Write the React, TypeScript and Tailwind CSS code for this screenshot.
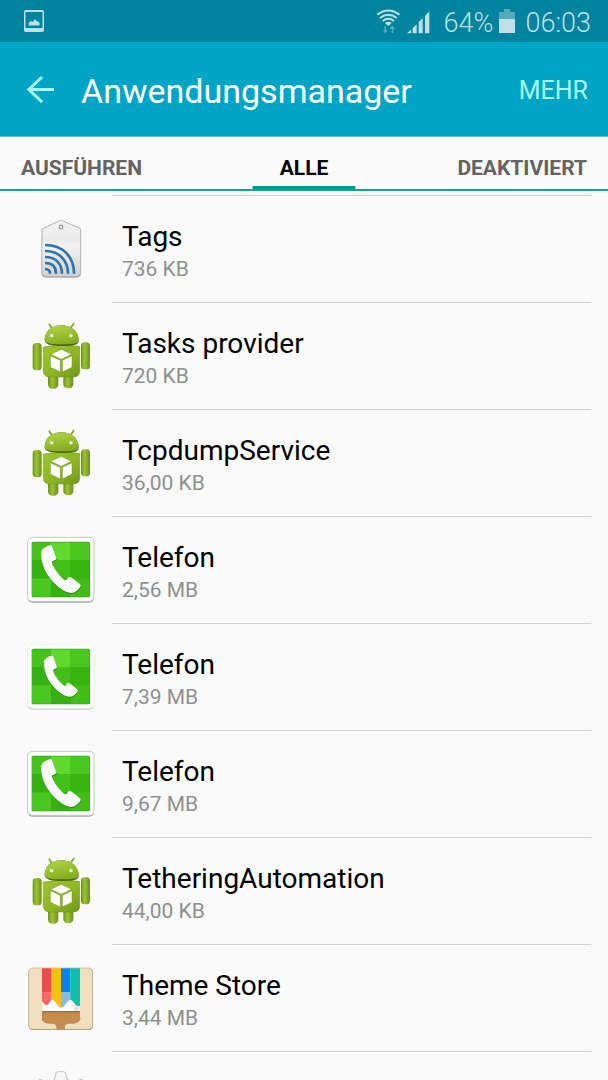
import type { ReactNode } from 'react';

interface AppEntry {
    name: string;
    size: string;
    icon: ReactNode;
}

const TagIcon = () => (
    <svg viewBox="15 26 216 216" className="size-full" aria-hidden="true">
        <defs>
            <linearGradient id="tag-body" x1="0" y1="0" x2="0" y2="1">
                <stop offset="0" stopColor="#f4f4f4" />
                <stop offset="0.35" stopColor="#e9e9e9" />
                <stop offset="0.45" stopColor="#f3f3f3" />
                <stop offset="1" stopColor="#cfcfcf" />
            </linearGradient>
        </defs>
        <path d="M66 71 L119 46 Q123 44 127 46 L180 69 Q182 70 182 74 V204 Q182 215 171 215 H76 Q65 215 65 204 Z" fill="url(#tag-body)" stroke="#b4b4b4" strokeWidth="3" />
        <path d="M69 207 Q71 215 80 215 H168 Q178 214 180 206" fill="none" stroke="#a2a2a2" strokeWidth="3" />
        <circle cx="123" cy="65" r="5.5" fill="#e8e8e8" stroke="#999999" strokeWidth="3.5" />
        <g fill="none" stroke="#2f74ad" strokeWidth="8">
            <path d="M75 119 C130 119 162 155 162 205" />
            <path d="M75 137 C118 137 144 165 144 205" />
            <path d="M75 155 C107 155 126 175 126 205" />
            <path d="M75 173 C97 173 108 185 108 205" />
            <path d="M75 191 C86 191 90 195 90 205" />
        </g>
    </svg>
);

const AndroidIcon = () => (
    <svg viewBox="15 27 216 216" className="size-full" aria-hidden="true">
        <defs>
            <linearGradient id="droid-body" x1="0" y1="0" x2="1" y2="1">
                <stop offset="0" stopColor="#9fc52d" />
                <stop offset="0.6" stopColor="#8cb522" />
                <stop offset="1" stopColor="#6f9419" />
            </linearGradient>
            <linearGradient id="droid-limb" x1="0" y1="0" x2="1" y2="0">
                <stop offset="0" stopColor="#6d8f1c" />
                <stop offset="0.4" stopColor="#9cc433" />
                <stop offset="1" stopColor="#6d8f1c" />
            </linearGradient>
            <linearGradient id="droid-head" x1="0" y1="0" x2="0.4" y2="1">
                <stop offset="0" stopColor="#b5d84c" />
                <stop offset="1" stopColor="#86ae20" />
            </linearGradient>
        </defs>
        <path d="M88 37 L99 55 M161 35 L148 54" stroke="#86a836" strokeWidth="5.5" strokeLinecap="round" />
        <rect x="84" y="178" width="31" height="52" rx="13" fill="url(#droid-limb)" />
        <rect x="130" y="178" width="30" height="51" rx="13" fill="url(#droid-limb)" />
        <rect x="38" y="93" width="27" height="82" rx="11" fill="url(#droid-limb)" />
        <rect x="183" y="91" width="27" height="81" rx="11" fill="url(#droid-limb)" />
        <path d="M70 105 Q125 96 179 103 V176 Q179 195 160 195 H90 Q70 195 70 176 Z" fill="url(#droid-body)" stroke="#6d8f1c" strokeWidth="1.5" />
        <path d="M74 84 C74 57 96 40 124 40 C152 40 176 57 176 87 C176 101 150 102 125 102 C98 102 74 99 74 84 Z" fill="#4c6812" />
        <path d="M74 84 C74 57 96 40 124 40 C152 40 176 57 176 85 C176 96 150 97 125 97 C98 97 74 95 74 84 Z" fill="url(#droid-head)" />
        <circle cx="95" cy="71" r="5" fill="#ffffff" />
        <circle cx="153" cy="71" r="5" fill="#ffffff" />
        <g fill="#ffffff" stroke="#688b17" strokeWidth="1.5" strokeLinejoin="round">
            <path d="M124 112 L155 127 L124 142 L92 127 Z" />
            <path d="M91 131 L121 145 V180 L91 166 Z" />
            <path d="M156 131 L127 145 V180 L156 166 Z" />
        </g>
    </svg>
);

const handset =
    'M64 66 C65 56 79 49 89 46 C93 45 95 47 97 51 L109 84 C110 87 108 89 104 91 L97 94 C94 97 98 107 106 119 C116 134 130 149 137 151 C140 151 141 149 143 145 C145 140 149 140 153 142 L179 162 C183 165 183 168 180 172 C175 179 167 188 155 189 C137 190 106 169 86 139 C70 116 62 90 64 66 Z';

const PhoneIcon = ({ small = false }: { small?: boolean }) => (
    <svg viewBox="15 15 216 216" className="size-full" aria-hidden="true">
        <rect x="23" y="24" width="199" height="194" rx="14" fill={small ? '#cbcbcb' : '#a8a8a8'} />
        <rect x="23" y="22" width="199" height="192" rx="14" fill="#ffffff" stroke={small ? '#eeeeee' : '#c6c6c6'} strokeWidth="3" />
        <rect x="35" y="35" width="175" height="167" rx="5" fill="#2ea70c" />
        <path d="M40 37 H93 V90 H36 V41 Q36 37 40 37 Z" fill="#45c01c" />
        <path d="M93 37 H152 V90 H93 Z" fill="#60d92f" />
        <path d="M152 37 H205 Q209 37 209 41 V90 H152 Z" fill="#4bc81f" />
        <path d="M36 90 H93 V145 H36 Z" fill="#37b012" />
        <path d="M93 90 H152 V145 H93 Z" fill="#42c018" />
        <path d="M152 90 H209 V145 H152 Z" fill="#38b310" />
        <path d="M36 145 H93 V200 H40 Q36 200 36 196 Z" fill="#4bc722" />
        <path d="M93 145 H152 V200 H93 Z" fill="#37b112" />
        <path d="M152 145 H209 V196 Q209 200 205 200 H152 Z" fill="#42bd18" />
        <g transform={small ? 'translate(17 17) scale(0.86)' : undefined}>
            <path d={handset} fill="#278c0d" transform="translate(1 3)" />
            <path d={handset} fill="#fafafa" />
        </g>
    </svg>
);

const ThemeIcon = () => (
    <svg viewBox="15 23 216 216" className="size-full" aria-hidden="true">
        <rect x="26" y="39" width="193" height="185" rx="13" fill="#7d7a68" />
        <rect x="26" y="38" width="192" height="184" rx="13" fill="#f1e0bd" stroke="#b9b19c" strokeWidth="2" />
        <path d="M66 125 H180 V168 H66 Z" fill="#ffffff" />
        <path d="M162 145 H178 V168 H162 Z" fill="#e6e6e6" />
        <path d="M66 39 H95 V111 H66 Z" fill="#eb4c50" />
        <path d="M66 111 H95 V134 C88 137 88 149 80 149 C74 149 72 143 66 139 Z" fill="#ff676b" />
        <path d="M95 39 H123 V157 C112 157 108 133 95 134 Z" fill="#f2c40f" />
        <path d="M123 39 H151 V111 H123 Z" fill="#0784ec" />
        <path d="M123 111 H151 V134 C139 136 137 156 123 157 Z" fill="#87bde2" />
        <path d="M151 39 H180 V152 C164 154 162 135 151 134 Z" fill="#0dbfac" />
        <path d="M66 168 H180 V187 C180 201 169 204 151 204 C137 204 133 208 133 222 H111 C111 208 105 204 94 204 C77 204 66 199 66 187 Z" fill="#c58c4b" />
        <path d="M66 168 H180 V171 H66 Z" fill="#8f5f35" />
        <path d="M66 187 C66 199 77 204 94 204 C105 204 111 208 111 222 M180 187 C180 201 169 204 151 204 C137 204 133 208 133 222" fill="none" stroke="#a8783f" strokeWidth="2" />
    </svg>
);

const GearIcon = () => (
    <svg viewBox="15 347 216 216" className="size-full" aria-hidden="true">
        <path
            d="M54 378 Q58 372 65 376 L82 386 L103 377 L108 356 Q109 352 114 352 H130 Q135 352 136 356 L141 374 L163 386 L180 376 Q186 372 190 378 L208 408 V500 H38 V408 Z"
            fill="#f7f7f7"
            stroke="#c2c2c2"
            strokeWidth="3"
        />
    </svg>
);

const WifiSignalIcon = () => (
    <svg viewBox="18 21 168 81" className="h-[27px] w-14" aria-hidden="true">
        <g fill="none" stroke="#bfe0e7" strokeWidth="6">
            <path d="M22 41 Q55 16 88 41" />
            <path d="M30 51 Q55 32 80 51" />
            <path d="M38 60 Q55 47 72 60" />
        </g>
        <path d="M45 66 Q55 59 65 66 L55 75 Z" fill="#bfe0e7" />
        <path d="M43 75 H48 V88 H54 L46 97 L38 88 H43 Z M65 96 V84 H59 L67 74 L76 84 H70 V96 Z" fill="#55a9bd" />
        <g fill="#bfe0e7">
            <path d="M111 97 L123 86 V97 Z" />
            <path d="M128 81 L140 70 V97 H128 Z" />
            <path d="M146 63 L158 51 V97 H146 Z" />
            <path d="M165 44 L178 31 V97 H165 Z" />
        </g>
    </svg>
);

const BatteryIcon = () => (
    <svg viewBox="0 0 16 24" className="h-6 w-4" aria-hidden="true">
        <path d="M5 0 H11 V3 H16 V11 H0 V3 H5 Z" fill="#55a9bd" />
        <path d="M0 10 H16 V24 H0 Z" fill="#bfe0e7" />
    </svg>
);

const PictureIcon = () => (
    <svg viewBox="0 0 20 22" className="h-[22px] w-5" aria-hidden="true">
        <path d="M2 0 H18 Q20 0 20 2 V20 Q20 22 18 22 H2 Q0 22 0 20 V2 Q0 0 2 0 Z M1.5 2 V18 H18.5 V2 Z" fill="#bfe0e7" fillRule="evenodd" />
        <path d="M4.5 15.5 V13 L7 11 L8.5 12 L11 9 L13 11.5 L14 11 L15.5 13 V15.5 Z" fill="#bfe0e7" />
    </svg>
);

const apps: AppEntry[] = [
    { name: 'Tags', size: '736 KB', icon: <TagIcon /> },
    { name: 'Tasks provider', size: '720 KB', icon: <AndroidIcon /> },
    { name: 'TcpdumpService', size: '36,00 KB', icon: <AndroidIcon /> },
    { name: 'Telefon', size: '2,56 MB', icon: <PhoneIcon /> },
    { name: 'Telefon', size: '7,39 MB', icon: <PhoneIcon small /> },
    { name: 'Telefon', size: '9,67 MB', icon: <PhoneIcon /> },
    { name: 'TetheringAutomation', size: '44,00 KB', icon: <AndroidIcon /> },
    { name: 'Theme Store', size: '3,44 MB', icon: <ThemeIcon /> },
];

const AppRow = ({ app }: { app: AppEntry }) => (
    <li className="flex h-[107px] shrink-0 items-center">
        <div className="mr-[15px] size-[72px] shrink-0">{app.icon}</div>
        <button className="flex h-full min-w-0 flex-1 flex-col justify-center border-b border-[#d2d2d2] pt-1 pl-[10px] text-left">
            <span className="text-[28px] leading-9 text-black">{app.name}</span>
            <span className="text-[21px] leading-7 text-[#8f8f8f]">{app.size}</span>
        </button>
    </li>
);

export default function App() {
    return (
        <div className="flex h-screen flex-col overflow-hidden bg-[#fafafa] font-['Roboto',sans-serif]">
            {/* Status bar */}
            <div className="flex h-[42px] shrink-0 items-center bg-[#00839e] pr-[17px] pl-6 text-[27px] leading-8 font-light text-[#bfe0e7]">
                <PictureIcon />
                <div className="ml-auto flex items-center">
                    <WifiSignalIcon />
                    <span className="ml-3 pt-1">64%</span>
                    <span className="mr-[10px] ml-[6px]"><BatteryIcon /></span>
                    <span className="pt-1">06:03</span>
                </div>
            </div>

            {/* Action bar */}
            <header className="flex h-[95px] shrink-0 items-center border-b border-[#6fbccc] bg-[#00a5c5] pr-5 pl-[27px]">
                <button aria-label="Zurück">
                    <svg viewBox="0 0 28 28" className="size-7" fill="none" stroke="#a5fff2" strokeWidth="3" aria-hidden="true">
                        <path d="M27 14.5 H2 M15 2 L2 14.5 L15 27" />
                    </svg>
                </button>
                <h1 className="ml-[26px] pt-1 text-[34px] leading-10 text-white">Anwendungsmanager</h1>
                <button className="ml-auto pt-1 text-[25px] leading-8 text-[#a5fff2]">MEHR</button>
            </header>

            {/* Tabs */}
            <nav className="grid h-[54px] shrink-0 grid-cols-3 border-b-2 border-[#1a9f90] px-[21px] text-[21px] leading-7 font-bold text-[#636363]">
                <button className="pt-[10px] text-left">AUSFÜHREN</button>
                <button className="relative pt-[10px] text-center text-black">
                    ALLE
                    <span className="absolute bottom-0 left-1/2 h-[3px] w-[103px] -translate-x-1/2 bg-[#009b8b]" />
                </button>
                <button className="pt-[10px] text-right">DEAKTIVIERT</button>
            </nav>

            {/* App list */}
            <ul className="flex min-h-0 flex-1 flex-col overflow-hidden pt-1 pr-[17px] pl-[25px]">
                <li className="ml-[87px] shrink-0 border-t border-[#d2d2d2]" role="separator" />
                {apps.map((app, index) => (
                    <AppRow key={index} app={app} />
                ))}
                <li className="flex h-[107px] shrink-0 items-center">
                    <div className="size-[72px]"><GearIcon /></div>
                </li>
            </ul>
        </div>
    );
}
